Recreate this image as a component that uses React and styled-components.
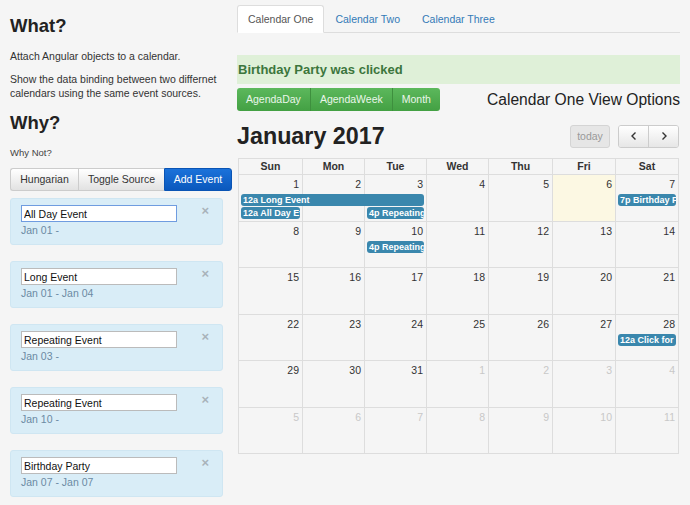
import React from "react";
import styled, { createGlobalStyle } from "styled-components";

const GlobalStyle = createGlobalStyle`
  body {
    margin: 0;
    background: #f5f5f5;
    font-family: "Liberation Sans", Arial, sans-serif;
    color: #333;
  }
`;

const events = [
  { title: "All Day Event", date: "Jan 01 -", focused: true },
  { title: "Long Event", date: "Jan 01 - Jan 04" },
  { title: "Repeating Event", date: "Jan 03 -" },
  { title: "Repeating Event", date: "Jan 10 -" },
  { title: "Birthday Party", date: "Jan 07 - Jan 07" },
];

const weeks = [
  {
    days: [1, 2, 3, 4, 5, 6, 7],
    bars: [
      { row: 2, col: 1, span: 3, time: "12a", title: "Long Event" },
      { row: 3, col: 1, span: 1, time: "12a", title: "All Day Event" },
      { row: 3, col: 3, span: 1, time: "4p", title: "Repeating Event" },
      { row: 2, col: 7, span: 1, time: "7p", title: "Birthday Party" },
    ],
  },
  {
    days: [8, 9, 10, 11, 12, 13, 14],
    bars: [{ row: 2, col: 3, span: 1, time: "4p", title: "Repeating Event" }],
  },
  { days: [15, 16, 17, 18, 19, 20, 21], bars: [] },
  {
    days: [22, 23, 24, 25, 26, 27, 28],
    bars: [{ row: 2, col: 7, span: 1, time: "12a", title: "Click for Google" }],
  },
  { days: [29, 30, 31, 1, 2, 3, 4], other: [3, 4, 5, 6], bars: [] },
  { days: [5, 6, 7, 8, 9, 10, 11], other: [0, 1, 2, 3, 4, 5, 6], bars: [] },
];

const dayNames = ["Sun", "Mon", "Tue", "Wed", "Thu", "Fri", "Sat"];

export default function App() {
  return (
    <>
      <GlobalStyle />
      <Page>
        <Sidebar>
          <Heading>What?</Heading>
          <Para>Attach Angular objects to a calendar.</Para>
          <Para>
            Show the data binding between two differnet calendars using the
            same event sources.
          </Para>
          <Heading>Why?</Heading>
          <Small>Why Not?</Small>
          <BtnGroup>
            <GrayBtn $w={68} $first>Hungarian</GrayBtn>
            <GrayBtn $w={86}>Toggle Source</GrayBtn>
            <BlueBtn>Add Event</BlueBtn>
          </BtnGroup>
          <CardList>
            {events.map((e, i) => (
              <Card key={i}>
                <CardBody>
                  <TitleInput defaultValue={e.title} $focused={e.focused} />
                  <DateText>{e.date}</DateText>
                </CardBody>
                <Close>×</Close>
              </Card>
            ))}
          </CardList>
        </Sidebar>

        <Main>
          <Tabs>
            <Tab $active>Calendar One</Tab>
            <Tab>Calendar Two</Tab>
            <Tab>Calendar Three</Tab>
          </Tabs>
          <Alert>Birthday Party was clicked</Alert>
          <ViewRow>
            <GreenGroup>
              <GreenBtn>AgendaDay</GreenBtn>
              <GreenBtn>AgendaWeek</GreenBtn>
              <GreenBtn>Month</GreenBtn>
            </GreenGroup>
            <ViewTitle>Calendar One View Options</ViewTitle>
          </ViewRow>
          <Toolbar>
            <MonthTitle>January 2017</MonthTitle>
            <ToolBtns>
              <TodayBtn>today</TodayBtn>
              <NavGroup>
                <NavBtn>
                  <Chevron viewBox="0 0 10 10">
                    <path d="M6.5 1.5 L3 5 L6.5 8.5" />
                  </Chevron>
                </NavBtn>
                <NavBtn>
                  <Chevron viewBox="0 0 10 10">
                    <path d="M3.5 1.5 L7 5 L3.5 8.5" />
                  </Chevron>
                </NavBtn>
              </NavGroup>
            </ToolBtns>
          </Toolbar>
          <Calendar>
            <HeadRow>
              {dayNames.map((d) => (
                <HeadCell key={d}>{d}</HeadCell>
              ))}
            </HeadRow>
            {weeks.map((w, wi) => (
              <Week key={wi}>
                {w.days.map((d, di) => (
                  <DayCell
                    key={"c" + di}
                    style={{ gridColumn: di + 1 }}
                    $today={wi === 0 && di === 5}
                  />
                ))}
                {w.days.map((d, di) => (
                  <DayNum
                    key={"n" + di}
                    style={{ gridColumn: di + 1 }}
                    $other={(w.other || []).includes(di)}
                  >
                    {d}
                  </DayNum>
                ))}
                {w.bars.map((b, bi) => (
                  <Bar
                    key={"b" + bi}
                    style={{
                      gridRow: b.row,
                      gridColumn: `${b.col} / span ${b.span}`,
                    }}
                  >
                    {b.time} {b.title}
                  </Bar>
                ))}
              </Week>
            ))}
          </Calendar>
        </Main>
      </Page>
    </>
  );
}

const Page = styled.div`
  display: flex;
  gap: 5px;
  padding: 0 10px 0 10px;
  font-size: 10.5px;
  line-height: 15px;
`;

const Sidebar = styled.div`
  width: 222px;
  flex-shrink: 0;
`;

const Heading = styled.h3`
  font-size: 18.5px;
  font-weight: bold;
  line-height: 20px;
  margin: 16px 0 13px;
  color: #222;
  & + p + p + h3 {
    margin-top: 13px;
  }
`;

const Para = styled.p`
  margin: 0 0 9px;
  line-height: 14px;
  color: #333;
`;

const Small = styled.p`
  margin: 0 0 8px;
  font-size: 9.5px;
  line-height: 14px;
  color: #444;
`;

const BtnGroup = styled.div`
  display: flex;
  height: 23px;
  margin-bottom: 7px;
`;

const GrayBtn = styled.div`
  width: ${(p) => p.$w}px;
  box-sizing: border-box;
  flex: 0 0 auto;
  white-space: nowrap;
  display: flex;
  align-items: center;
  justify-content: center;
  color: #333;
  background: linear-gradient(#fff, #e2e2e2);
  border: 1px solid #ccc;
  border-right: none;
  border-radius: ${(p) => (p.$first ? "3px 0 0 3px" : "0")};
`;

const BlueBtn = styled.div`
  flex: 1;
  display: flex;
  align-items: center;
  justify-content: center;
  color: #fff;
  background: linear-gradient(#1b72da, #0a58bd);
  border: 1px solid #0a54b4;
  border-radius: 0 3px 3px 0;
`;

const CardList = styled.div`
  display: flex;
  flex-direction: column;
  gap: 16px;
  width: 213px;
`;

const Card = styled.div`
  display: flex;
  justify-content: space-between;
  background: #d9edf7;
  border: 1px solid #cfe6f2;
  border-radius: 3px;
  padding: 6px 13px 6px 10px;
  height: 33px;
`;

const CardBody = styled.div`
  display: flex;
  flex-direction: column;
`;

const TitleInput = styled.input`
  width: 156px;
  height: 19px;
  box-sizing: border-box;
  border: 1px solid ${(p) => (p.$focused ? "#6f9ce0" : "#bbb")};
  background: #fff;
  font: 10.5px "Liberation Sans", Arial, sans-serif;
  color: #111;
  padding: 0 2px;
  outline: none;
`;

const DateText = styled.div`
  margin-top: 1px;
  color: #6b8aa3;
  font-size: 10.5px;
`;

const Close = styled.div`
  color: #a9b3ba;
  font-size: 13px;
  font-weight: bold;
  line-height: 12px;
`;

const Main = styled.div`
  flex: 1;
  padding-top: 5px;
  min-width: 0;
`;

const Tabs = styled.div`
  display: flex;
  border-bottom: 1px solid #ddd;
  height: 27px;
  margin-bottom: 22px;
`;

const Tab = styled.div`
  padding: 0 10px;
  margin-bottom: -1px;
  display: flex;
  align-items: center;
  color: ${(p) => (p.$active ? "#555" : "#337ab7")};
  background: ${(p) => (p.$active ? "#fff" : "transparent")};
  border: 1px solid ${(p) => (p.$active ? "#ddd" : "transparent")};
  border-bottom-color: ${(p) => (p.$active ? "#fff" : "transparent")};
  border-radius: 3px 3px 0 0;
`;

const Alert = styled.div`
  background: #dff0d8;
  color: #3c763d;
  font-size: 13px;
  font-weight: bold;
  height: 29px;
  display: flex;
  align-items: center;
  padding-left: 1px;
  margin-bottom: 4px;
`;

const ViewRow = styled.div`
  display: flex;
  justify-content: space-between;
  align-items: center;
  margin-bottom: 14px;
`;

const GreenGroup = styled.div`
  display: flex;
  height: 23px;
  border-radius: 3px;
  overflow: hidden;
`;

const GreenBtn = styled.div`
  display: flex;
  align-items: center;
  padding: 0 9px;
  color: #eaf6ea;
  background: linear-gradient(#5cb85c, #43a043);
  border-right: 1px solid #3e8f3e;
  &:last-child {
    border-right: none;
  }
`;

const ViewTitle = styled.div`
  font-size: 15.6px;
  color: #222;
`;

const Toolbar = styled.div`
  display: flex;
  justify-content: space-between;
  align-items: center;
  height: 22px;
  margin-bottom: 11px;
  padding-right: 1px;
`;

const MonthTitle = styled.h2`
  margin: 0;
  font-size: 23.3px;
  font-weight: bold;
  color: #222;
`;

const ToolBtns = styled.div`
  display: flex;
  gap: 8px;
`;

const TodayBtn = styled.div`
  width: 38px;
  height: 21px;
  display: flex;
  align-items: center;
  justify-content: center;
  color: #999;
  background: #e6e6e6;
  border: 1px solid #d4d4d4;
  border-radius: 3px;
`;

const NavGroup = styled.div`
  display: flex;
  border: 1px solid #ccc;
  border-radius: 3px;
  overflow: hidden;
`;

const NavBtn = styled.div`
  width: 29px;
  height: 21px;
  display: flex;
  align-items: center;
  justify-content: center;
  background: linear-gradient(#fff, #e6e6e6);
  &:first-child {
    border-right: 1px solid #ccc;
  }
`;

const Chevron = styled.svg`
  width: 10px;
  height: 10px;
  fill: none;
  stroke: #333;
  stroke-width: 1.4;
`;

const cols = "64px 62px 62px 62px 64px 63px 63px";

const Calendar = styled.div`
  width: 440px;
  margin-left: 1px;
  border-top: 1px solid #ddd;
  border-left: 1px solid #ddd;
`;

const HeadRow = styled.div`
  display: grid;
  grid-template-columns: ${cols};
`;

const HeadCell = styled.div`
  height: 15px;
  line-height: 15px;
  text-align: center;
  font-weight: bold;
  border-right: 1px solid #ddd;
  border-bottom: 1px solid #ddd;
`;

const Week = styled.div`
  display: grid;
  grid-template-columns: ${cols};
  grid-template-rows: 19px 13px 13px 1fr;
  height: 46.5px;
`;

const DayCell = styled.div`
  grid-row: 1 / -1;
  border-right: 1px solid #ddd;
  border-bottom: 1px solid #ddd;
  background: ${(p) => (p.$today ? "#fcf8e3" : "transparent")};
`;

const DayNum = styled.div`
  grid-row: 1;
  text-align: right;
  padding: 2px 4px 0 0;
  color: ${(p) => (p.$other ? "#c8c8c8" : "#333")};
`;

const Bar = styled.div`
  margin: 0 3px 1px 2px;
  height: 12px;
  line-height: 12px;
  background: #3a87ad;
  border-radius: 3px;
  color: #fff;
  font-size: 9px;
  font-weight: bold;
  padding-left: 2px;
  white-space: nowrap;
  overflow: hidden;
`;
